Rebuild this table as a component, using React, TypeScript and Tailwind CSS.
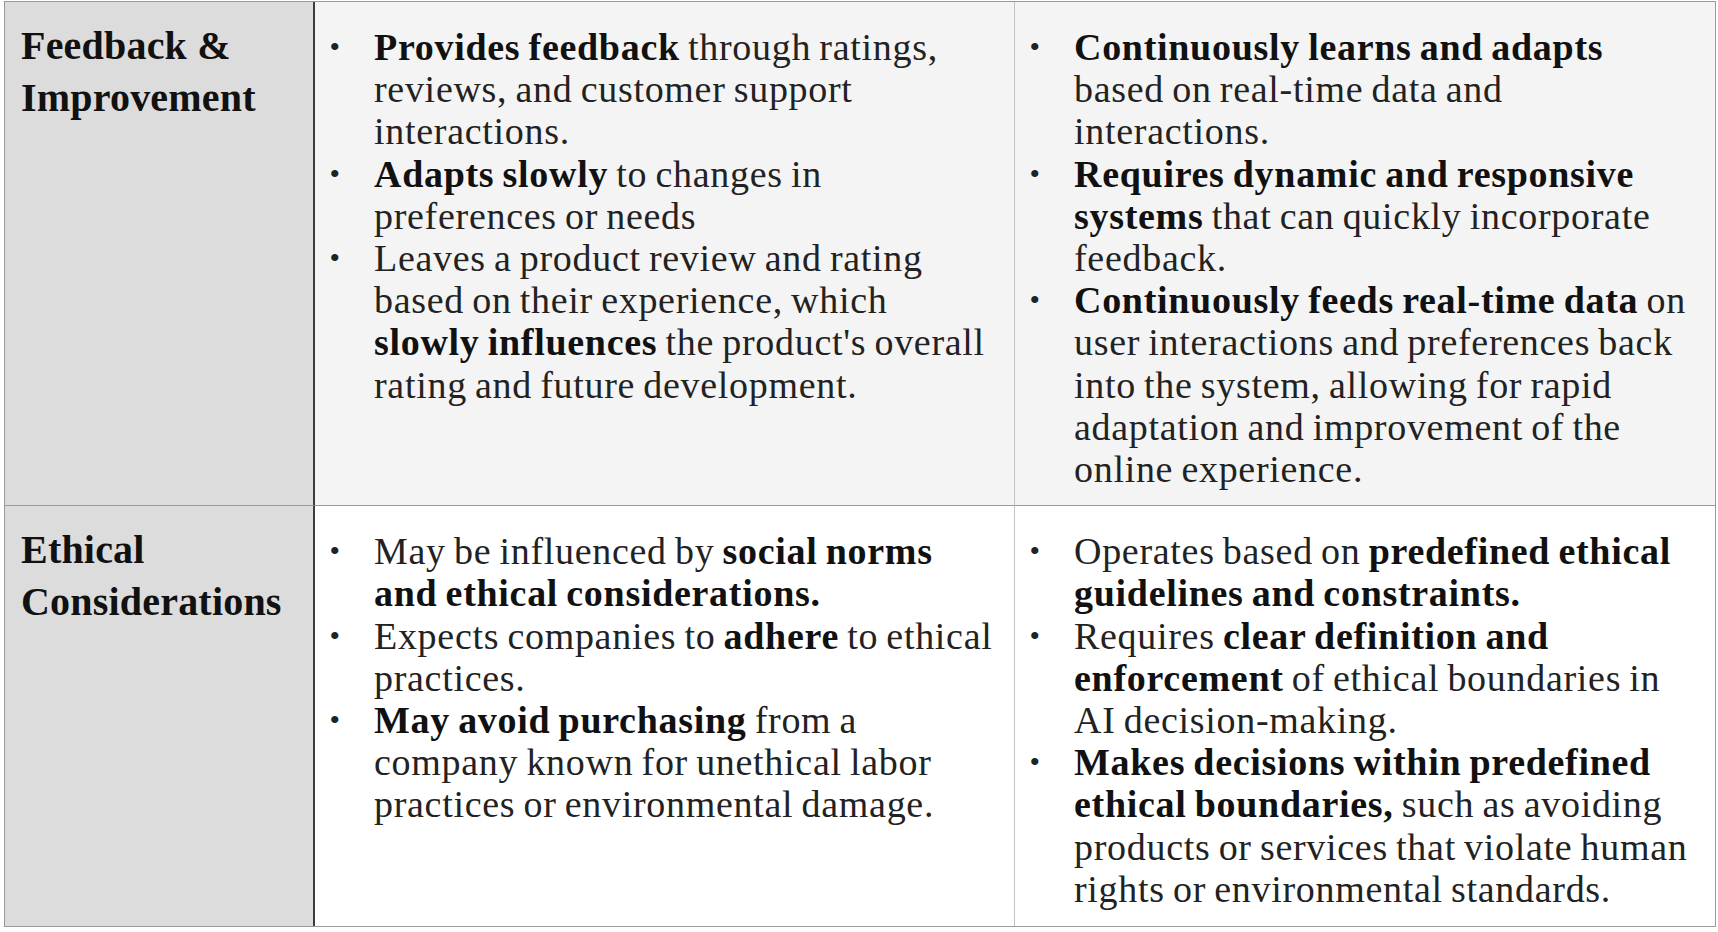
import React from 'react';

type Part = { t: string; b?: boolean };
type Row = { label: string; bg: string; pb: string; consumer: Part[][]; ai: Part[][] };

const rows: Row[] = [
  {
    label: 'Feedback & Improvement',
    bg: 'bg-[#f4f4f4]',
    pb: 'pb-[15px]',
    consumer: [
      [{ t: 'Provides feedback', b: true }, { t: ' through ratings, reviews, and customer support interactions.' }],
      [{ t: 'Adapts slowly', b: true }, { t: ' to changes in preferences or needs' }],
      [
        { t: 'Leaves a product review and rating based on their experience, which ' },
        { t: 'slowly influences', b: true },
        { t: " the product's overall rating and future development." },
      ],
    ],
    ai: [
      [{ t: 'Continuously learns and adapts', b: true }, { t: ' based on real-time data and interactions.' }],
      [{ t: 'Requires dynamic and responsive systems', b: true }, { t: ' that can quickly incorporate feedback.' }],
      [
        { t: 'Continuously feeds real-time data', b: true },
        { t: ' on user interactions and preferences back into the system, allowing for rapid adaptation and improvement of the online experience.' },
      ],
    ],
  },
  {
    label: 'Ethical Considerations',
    bg: 'bg-white',
    pb: 'pb-[16px]',
    consumer: [
      [{ t: 'May be influenced by ' }, { t: 'social norms and ethical considerations.', b: true }],
      [{ t: 'Expects companies to ' }, { t: 'adhere', b: true }, { t: ' to ethical practices.' }],
      [
        { t: 'May avoid purchasing', b: true },
        { t: ' from a company known for unethical labor practices or environmental damage.' },
      ],
    ],
    ai: [
      [{ t: 'Operates based on ' }, { t: 'predefined ethical guidelines and constraints.', b: true }],
      [
        { t: 'Requires ' },
        { t: 'clear definition and enforcement', b: true },
        { t: ' of ethical boundaries in AI decision-making.' },
      ],
      [
        { t: 'Makes decisions within predefined ethical boundaries,', b: true },
        { t: ' such as avoiding products or services that violate human rights or environmental standards.' },
      ],
    ],
  },
];

const BulletList: React.FC<{ items: Part[][] }> = ({ items }) => (
  <ul className="flex flex-col">
    {items.map((parts, i) => (
      <li key={i} className="flex">
        <span className="w-[12px] shrink-0 text-center text-[30px] text-[#222]">•</span>
        <span className="ml-[33px]">
          {parts.map((p, j) =>
            p.b ? (
              <strong key={j} className="font-bold text-[#111]">{p.t}</strong>
            ) : (
              <span key={j}>{p.t}</span>
            )
          )}
        </span>
      </li>
    ))}
  </ul>
);

export default function App() {
  return (
    <div className="min-h-screen bg-white pl-[4px] pt-[1px] font-['Liberation_Serif',serif]">
      <div className="grid w-[1712px] grid-cols-[310px_700px_700px] border border-[#9a9a9a]">
        {rows.map((row, r) => {
          const last = r === rows.length - 1;
          const edge = last ? '' : 'border-b border-[#9a9a9a]';
          const body = `${row.bg} pl-[14px] pr-[14px] pt-[24px] ${row.pb} text-[38px] leading-[42.2px] tracking-[0.7px] [word-spacing:-2px] text-[#222] ${edge}`;
          return (
            <React.Fragment key={row.label}>
              <div className={`bg-[#dcdcdc] border-r-2 border-r-[#3d3d3d] pl-[16px] pr-[10px] pt-[18px] ${edge}`}>
                <h3 className="text-[40px] font-bold leading-[51.5px] tracking-[0.2px] text-[#111]">{row.label}</h3>
              </div>
              <div className={`${body} border-r border-r-[#c2c2c2]`}>
                <BulletList items={row.consumer} />
              </div>
              <div className={body}>
                <BulletList items={row.ai} />
              </div>
            </React.Fragment>
          );
        })}
      </div>
    </div>
  );
}
